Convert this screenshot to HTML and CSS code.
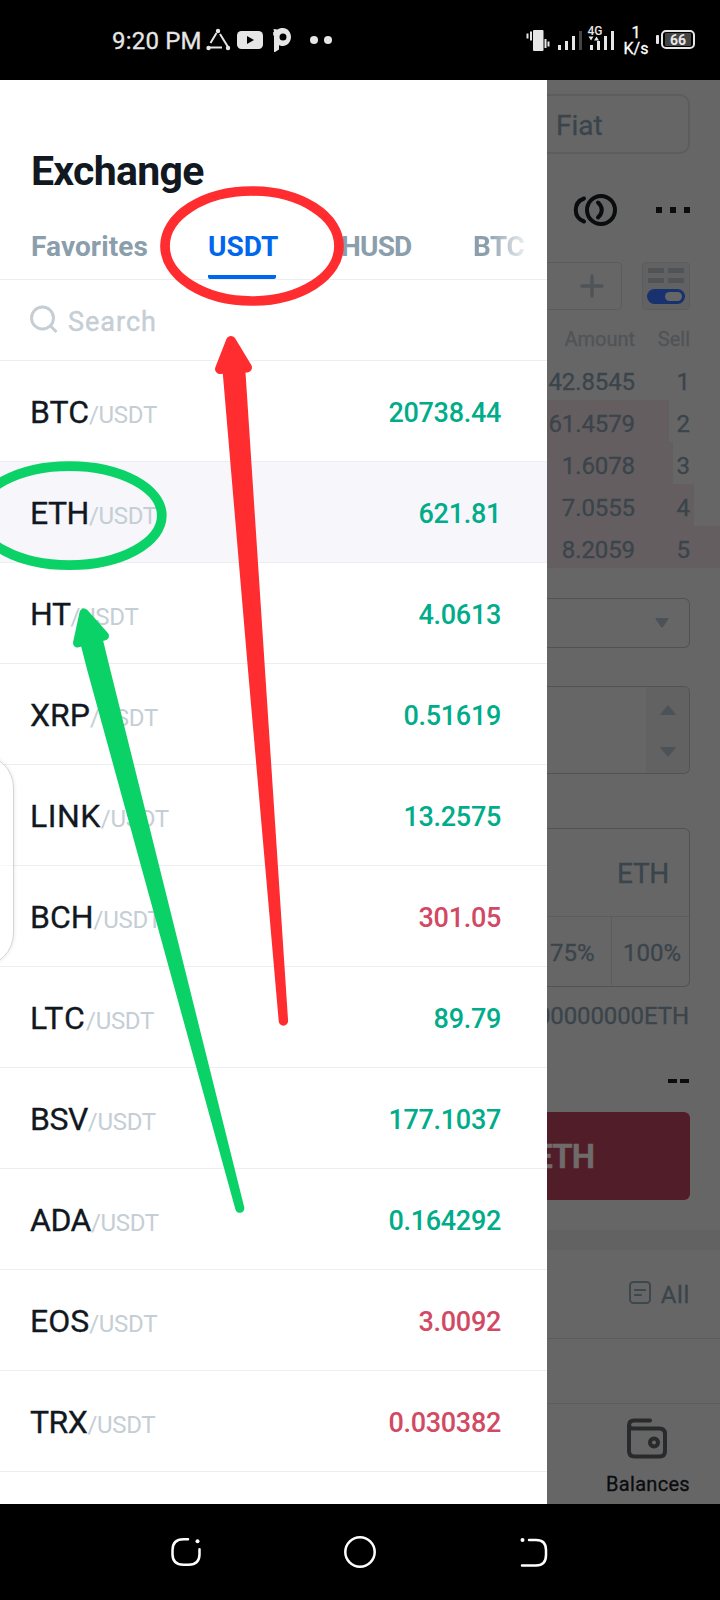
FILE: index.html
```html
<!DOCTYPE html>
<html lang="en">
<head>
<meta charset="utf-8">
<title>Exchange</title>
<link rel="stylesheet" href="styles.css">
</head>
<body>
<div class="phone">
  <header class="status">
    <span class="clock">9:20 PM</span>
    <svg class="status-left" width="130" height="26" viewBox="203 27 130 26" fill="#e6e6e6">
      <g stroke="#e6e6e6" stroke-width="2"><path d="M216.500 33l-6 10M220 34l8 13M210 47.500h12"/></g>
      <circle cx="218" cy="31" r="2.200"/><circle cx="208.500" cy="48" r="2.200"/><circle cx="228" cy="48" r="2.200"/>
      <rect x="237" y="31" width="26" height="18" rx="4.500"/><path d="M247 36l7 4-7 4z" fill="#000"/>
      <path fill-rule="evenodd" d="M273.500 29l4 .500c2-1.200 3.500-1.500 5.500-1.500 4.500 0 8 4 8 9s-4 9-8 9c-2 0-3-.300-4-1v4.500l-4 2.500h-1V35.500h-.800v-3.500h.800zM279.500 37a3.500 3.500 0 1 0 7 0a3.500 3.500 0 1 0-7 0z"/>
      <circle cx="314" cy="40" r="4"/><circle cx="328" cy="40" r="4"/>
    </svg>
    <svg class="status-right" width="92" height="30" viewBox="526 25 92 30" fill="#e6e6e6">
      <rect x="533" y="30" width="10.500" height="21" rx="1"/>
      <path d="M530 31.500h2v9h-2zM526.500 33.500h2v5h-2zM544.500 39h2v9h-2zM547.500 41.500h2v5h-2z"/>
      <path d="M558 45h3v5h-3zM565 41h3v9h-3zM572 36h3v14h-3z"/><path d="M579 31h3v19h-3z" fill="#444"/>
      <path d="M590 45h3v5h-3zM597 41h3v9h-3zM604 36h3v14h-3zM611 31h3v19h-3z"/>
      <path d="M588.500 36.500h5l-2.500 4zM594 40.500h5l-2.500-4z"/>
      <text x="587.500" y="35" class="net">4G</text>
    </svg>
    <span class="speed">1<br>K/s</span>
    <svg class="battery" width="40" height="22" viewBox="655 29 40 22">
      <rect x="656" y="35" width="3" height="9" rx="1" fill="#e6e6e6"/>
      <rect x="662" y="31" width="32" height="17" rx="4" fill="none" stroke="#e6e6e6" stroke-width="2"/>
      <rect x="665" y="33" width="26" height="13" rx="1" fill="#444"/>
      <text x="670" y="45.300" class="charge">66</text>
    </svg>
  </header>

  <main class="screen">
    <section class="drawer">
      <h1 class="title">Exchange</h1>
      <nav class="tabs">
        <span class="tab fav">Favorites</span>
        <span class="tab usdt">USDT</span>
        <span class="tab husd">HUSD</span>
        <span class="tab btc">BTC</span>
      </nav>
      <div class="search">
        <svg width="30" height="30" viewBox="0 0 30 30" fill="none" stroke="#c5ced5" stroke-width="3"><circle cx="12.500" cy="13" r="11"/><path d="M20 20.500l6.500 6.500"/></svg>
        <span>Search</span>
      </div>
      <ul class="pairs">
        <li><b>BTC</b><i>/USDT</i><em>20738.44</em></li>
        <li class="active"><b class="tight">ETH</b><i>/USDT</i><em>621.81</em></li>
        <li><b class="tight">HT</b><i>/USDT</i><em>4.0613</em></li>
        <li><b>XRP</b><i>/USDT</i><em>0.51619</em></li>
        <li><b class="link">LINK</b><i>/USDT</i><em>13.2575</em></li>
        <li><b>BCH</b><i>/USDT</i><em class="down">301.05</em></li>
        <li><b class="wide">LTC</b><i>/USDT</i><em>89.79</em></li>
        <li><b class="tight">BSV</b><i>/USDT</i><em>177.1037</em></li>
        <li><b class="tight">ADA</b><i>/USDT</i><em>0.164292</em></li>
        <li><b>EOS</b><i>/USDT</i><em class="down">3.0092</em></li>
        <li><b class="tight">TRX</b><i>/USDT</i><em class="down">0.030382</em></li>
      </ul>
    </section>

    <section class="trade">
      <div class="fiat">Fiat</div>
      <div class="tools">
        <svg width="44" height="34" viewBox="573 193 44 34" fill="none" stroke="#0a0c0e" stroke-width="4" stroke-linecap="round"><circle cx="601" cy="210" r="14"/><path d="M584 198.500c-11 4-11 19 0 23M598 202.500c5 4.500 5 10.500 0 15"/></svg>
        <svg width="34" height="6" viewBox="0 0 34 6" fill="#0a0c0e"><path d="M0 0h6v6H0zM14 0h6v6h-6zM28 0h6v6h-6z"/></svg>
      </div>
      <div class="depth">
        <div class="plus"><svg width="24" height="24" viewBox="0 0 24 24" stroke="#505457" stroke-width="3.500" stroke-linecap="round"><path d="M12 2v20M2 12h20"/></svg></div>
        <div class="mode"><svg width="48" height="48" viewBox="642 262 48 48"><path fill="#505457" d="M648 268h16v5h-16zM668 268h16v5h-16zM648 278h16v5h-16zM668 278h16v5h-16z"/><rect x="647" y="289" width="38" height="15" rx="7.500" fill="#17326f"/><rect x="665" y="292" width="17" height="9" rx="4.500" fill="#666"/></svg></div>
      </div>
      <div class="book">
        <div class="head"><span>Amount</span><span>Sell</span></div>
        <div class="order"><span>42.8545</span><span>1</span></div>
        <div class="order" style="--fill:122px"><span>61.4579</span><span>2</span></div>
        <div class="order" style="--fill:126px"><span>1.6078</span><span>3</span></div>
        <div class="order" style="--fill:147px"><span>7.0555</span><span>4</span></div>
        <div class="order" style="--fill:173px"><span>8.2059</span><span>5</span></div>
      </div>
      <div class="select"><svg width="14" height="10" viewBox="0 0 14 10" fill="#4c5358"><path d="M1 0h12q1 0 .500 1L8 9q-1 1-2 0L.500 1Q0 0 1 0z"/></svg></div>
      <div class="price"><div class="step">
        <svg width="16" height="10" viewBox="0 0 16 10" fill="#4c5358"><path d="M1 10h14q1 0 .500-1L9 1Q8 0 7 1L.500 9Q0 10 1 10z"/></svg>
        <svg width="16" height="10" viewBox="0 0 16 10" fill="#4c5358"><path d="M1 0h14q1 0 .500 1L9 9q-1 1-2 0L.500 1Q0 0 1 0z"/></svg>
      </div></div>
      <div class="amount">
        <div class="unit">ETH</div>
        <div class="percents"><span>75%</span><span>100%</span></div>
      </div>
      <div class="avail">00000000ETH</div>
      <div class="total"><i></i><i></i></div>
      <div class="sell"><span>ETH</span></div>
      <div class="band"></div>
      <div class="all">
        <svg width="22" height="23" viewBox="0 0 22 23" fill="none" stroke="#3d474e" stroke-width="2"><rect x="1" y="1" width="20" height="21" rx="3.500"/><path d="M6 9h10M6 14h6" stroke-linecap="round"/></svg>
        <span>All</span>
      </div>
      <div class="gap"></div>
      <div class="balances">
        <svg width="40" height="41" viewBox="0 0 40 41" fill="none" stroke="#292a2b" stroke-width="4" stroke-linecap="round"><path d="M23 2.500H7Q2 2.500 2 7.500V33q0 5.500 5.500 5.500h25q5.500 0 5.500-5.500V16q0-5.500-5.500-5.500H6.500Q2 10.500 2 7"/><circle cx="27" cy="24.500" r="4"/></svg>
        <span>Balances</span>
      </div>
    </section>
    <div class="handle"></div>
  </main>

  <footer class="navbar">
    <svg width="30" height="30" viewBox="171 1537 30 30" fill="none" stroke="#fff" stroke-width="2.500" stroke-linecap="round"><path d="M188 1539.300h-4.500q-11 0-11 11v4q0 10.500 11 10.500h5q11 0 11-10.500v-5"/><circle cx="197.500" cy="1541.300" r="2" fill="#fff" stroke="none"/></svg>
    <svg width="32" height="32" viewBox="0 0 32 32" fill="none" stroke="#fff" stroke-width="2.500"><circle cx="16" cy="16" r="14.700"/></svg>
    <svg width="28" height="30" viewBox="520 1537 28 30" fill="none" stroke="#fff" stroke-width="2.500" stroke-linecap="round"><path d="M529 1540h7q10 0 10 10v5q0 10.500-10 10.500h-14"/><circle cx="522.500" cy="1540" r="2" fill="#fff" stroke="none"/></svg>
  </footer>

  <svg class="marks" width="720" height="1600" viewBox="0 0 720 1600">
    <g fill="none" stroke-width="9.700">
      <ellipse cx="252" cy="246" rx="87" ry="55" stroke="#ff2d30"/>
      <ellipse cx="69.500" cy="515.600" rx="92.300" ry="49.500" stroke="#0ad266"/>
    </g>
    <g fill="#ff2d30" stroke="#ff2d30" stroke-linejoin="round">
      <path d="M231 341l-11 28 27-1.500z" stroke-width="10"/>
      <path d="M222.500 370L248 670l30.700 351a4.700 4.700 0 0 0 9.400 0L265 670 245.200 368z" stroke="none"/>
    </g>
    <g fill="#0ad266" stroke="#0ad266" stroke-linejoin="round">
      <path d="M84 613l-6.500 30 27-7z" stroke-width="9"/>
      <path d="M79.500 640L87.200 670 186 1030l49.300 179a4.500 4.500 0 0 0 9-1.500L200 1030 110.300 670 102.500 638z" stroke="none"/>
    </g>
  </svg>
</div>
</body>
</html>
```
FILE: styles.css
```css
* { box-sizing: border-box; }
body { margin: 0; font-family: Roboto, "Liberation Sans", sans-serif; }
svg { display: block; flex: none; }
b, i, em { font-style: normal; font-weight: 400; }
.phone { position: relative; width: 720px; height: 1600px; overflow: hidden; background: #000; }

.status { display: flex; height: 80px; color: #e6e6e6; }
.clock { width: 91px; margin: 26px 0 0 112px; font-size: 24px; line-height: 30px; letter-spacing: .2px; white-space: nowrap; -webkit-text-stroke: .3px; }
.status-left { margin-top: 27px; }
.status-right { margin: 25px 0 0 193px; }
.speed { width: 36px; margin-top: 25px; font-size: 16px; line-height: 16px; text-align: center; color: #fff; -webkit-text-stroke: .3px; }
.battery { margin: 29px 0 0 1px; }
.net { font: 500 12px Roboto, sans-serif; }
.charge { font: 700 14px Roboto, sans-serif; fill: #e6e6e6; }

.screen { position: relative; display: flex; height: 1424px; }
.drawer { width: 547px; background: #fff; }
.title { margin: 0; padding: 66px 0 0 31px; height: 142px; font-size: 41px; line-height: 50px; font-weight: 700; letter-spacing: -.7px; color: #11181f; }
.tabs { display: flex; height: 58px; border-bottom: 1px solid #eceef0; padding-left: 31px; font-size: 28px; line-height: 50px; font-weight: 700; color: #8b9eac; }
.tab { flex: none; height: 56px; }
.fav { width: 177px; letter-spacing: .1px; }
.usdt { width: 68px; height: 57px; color: #0067ed; border-bottom: 4px solid #0067ed; border-radius: 2px; margin-right: 65px; white-space: nowrap; }
.husd { width: 132px; letter-spacing: -.8px; }
.btc { width: 56px; letter-spacing: -.5px; background: linear-gradient(90deg, #8b9eac 25%, #edf0f2 95%); -webkit-background-clip: text; background-clip: text; color: transparent; }
.search { display: flex; align-items: center; gap: 8px; height: 81px; padding-left: 30px; border-bottom: 1px solid #eceef0; font-size: 27px; letter-spacing: 1px; color: #c5ced5; }
.search span { padding-top: 4px; -webkit-text-stroke: .4px; }
.pairs { margin: 0; padding: 0; list-style: none; }
.pairs li { display: flex; align-items: baseline; height: 101px; padding: 0 46px 0 30px; border-bottom: 1px solid #eceef0; line-height: 102px; color: #11181f; }
.pairs .active { background: #f6f6fb; }
.pairs b { font-size: 32px; -webkit-text-stroke: .3px; }
.pairs .tight { letter-spacing: -.5px; }
.pairs .link { letter-spacing: .5px; }
.pairs .wide { letter-spacing: 1.2px; }
.pairs i { font-size: 24px; letter-spacing: -.3px; color: #c5ced5; }
.pairs em { margin-left: auto; font-size: 27px; line-height: 100px; letter-spacing: -.3px; font-weight: 500; color: #00ac8a; transform: translateY(-1px); }
.pairs .down { color: #d14963; }

.trade { display: flex; flex-direction: column; align-items: flex-end; width: 173px; overflow: hidden; background: #666; color: #3a444b; -webkit-text-stroke: .3px; }
.fiat { flex: none; width: 143px; height: 60px; margin: 14px 30px 0 0; padding-left: 9px; border: 2px solid #5d5d5e; border-left: 0; border-radius: 0 10px 10px 0; font-size: 28px; line-height: 60px; }
.tools { display: flex; align-items: center; gap: 39px; height: 34px; margin: 39px 30px 0 0; }
.depth { display: flex; justify-content: space-between; width: 143px; height: 48px; margin: 35px 30px 0 0; }
.plus { width: 75px; border: 1px solid #5a5b5c; border-left: 0; border-radius: 0 5px 5px 0; padding: 11px 0 0 33px; }
.mode { width: 48px; background: #626262; border-radius: 5px; box-shadow: inset 0 0 0 1px #5c5c5c; }
.book { width: 173px; }
.head, .order { display: grid; grid-template-columns: 88px 55px; text-align: right; }
.head { height: 48px; font-size: 20px; line-height: 58px; color: #505457; }
.order { height: 42px; font-size: 24px; line-height: 49px; letter-spacing: -.1px; background: linear-gradient(#645e60, #645e60) no-repeat 0 0 / var(--fill, 0) 100%; }
.select { display: flex; justify-content: flex-end; align-items: center; width: 143px; height: 50px; margin: 30px 30px 0 0; padding-right: 20px; border: 1px solid #505253; border-left: 0; border-radius: 0 6px 6px 0; }
.price { display: flex; justify-content: flex-end; width: 143px; height: 88px; margin: 38px 30px 0 0; border: 1px solid #505253; border-left: 0; border-radius: 0 6px 6px 0; overflow: hidden; }
.step { display: flex; flex-direction: column; align-items: center; gap: 32px; width: 43px; padding-top: 18px; background: #626262; }
.amount { width: 143px; height: 159px; margin: 54px 30px 0 0; border: 1px solid #505253; border-left: 0; border-radius: 0 6px 6px 0; }
.unit { height: 88px; padding-right: 20px; font-size: 28px; line-height: 90px; letter-spacing: -.3px; text-align: right; border-bottom: 1px solid #5b5c5d; }
.percents { display: flex; height: 68px; font-size: 24px; line-height: 73px; }
.percents span:first-child { width: 65px; padding-left: 3px; border-right: 1px solid #5b5c5d; }
.percents span:last-child { flex: 1; padding-left: 11px; }
.avail { height: 57px; margin-right: 31px; font-size: 24px; line-height: 58px; white-space: nowrap; letter-spacing: -.1px; }
.total { display: flex; gap: 3px; margin: 35px 31px 0 0; }
.total i { width: 9px; height: 4px; background: #0a0c0e; }
.sell { display: flex; justify-content: flex-end; width: 143px; height: 88px; margin: 29px 30px 0 0; padding-right: 96px; border-radius: 0 6px 6px 0; background: #511d28; color: #6f6b6b; font-size: 33px; font-weight: 700; letter-spacing: -1px; line-height: 90px; white-space: nowrap; }
.band { width: 173px; height: 20px; margin-top: 30px; background: #626262; }
.all { display: flex; justify-content: flex-end; align-items: center; gap: 10px; width: 173px; height: 89px; padding: 0 30px 4px 0; border-bottom: 1px solid #5b5c5d; font-size: 24px; letter-spacing: .6px; }
.all span { padding-top: 5px; }
.gap { width: 173px; height: 65px; border-bottom: 1px solid #5b5c5d; }
.balances { display: grid; justify-items: center; margin: 14px 30px 0 0; font-size: 20px; line-height: 24px; gap: 13px; letter-spacing: .3px; color: #0a0c0e; }
.balances svg { margin-right: 2px; }

.handle { position: absolute; left: -62px; top: 674px; width: 76px; height: 213px; border: 1px solid #d4d4d4; border-radius: 34px; background: rgba(255,255,255,.5); box-shadow: 0 0 4px rgba(0,0,0,.1); }
.navbar { display: flex; align-items: center; height: 96px; padding-left: 171px; }
.navbar svg:nth-child(2) { margin-left: 143px; }
.navbar svg:nth-child(3) { margin-left: 144px; }
.marks { position: absolute; left: 0; top: 0; }
```
